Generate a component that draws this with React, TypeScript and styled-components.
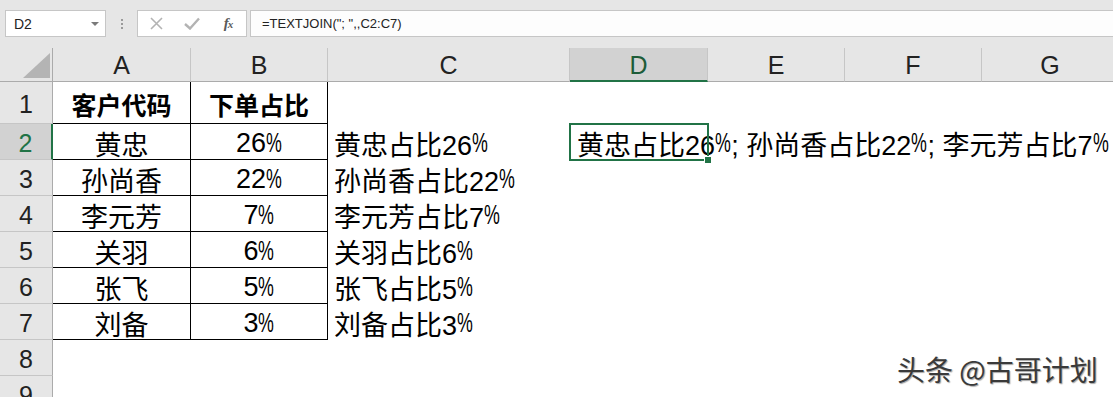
import React from "react";
import styled, { createGlobalStyle } from "styled-components";

const GlobalStyle = createGlobalStyle`
  * { box-sizing: border-box; }
  html, body { margin: 0; padding: 0; background: #ffffff; }
  body { font-family: "Liberation Sans", "Noto Sans CJK SC", sans-serif; }
`;

const Root = styled.div`
  position: relative;
  width: 1113px;
  height: 397px;
  overflow: hidden;
  background: #ffffff;
`;

const FormulaBar = styled.div`
  display: flex;
  align-items: flex-start;
  height: 48px;
  padding: 10px 0 0 5px;
  background: #e6e6e6;
`;

const NameBox = styled.div`
  display: flex;
  align-items: center;
  justify-content: space-between;
  width: 101px;
  height: 27px;
  padding: 0 6px 0 8px;
  background: #ffffff;
  border: 1px solid #c6c6c6;
  font-family: "Liberation Sans", sans-serif;
  font-size: 14px;
  color: #222;
`;

const Caret = styled.span`
  width: 0;
  height: 0;
  border-left: 4px solid transparent;
  border-right: 4px solid transparent;
  border-top: 4px solid #7a7a7a;
`;

const Grip = styled.div`
  display: flex;
  flex-direction: column;
  align-items: center;
  justify-content: center;
  gap: 2px;
  width: 31px;
  height: 27px;
`;

const GripDot = styled.span`
  width: 2px;
  height: 2px;
  background: #9a9a9a;
`;

const FxBox = styled.div`
  display: grid;
  grid-template-columns: repeat(3, 1fr);
  align-items: center;
  justify-items: center;
  width: 110px;
  height: 27px;
  background: #ffffff;
  border: 1px solid #c6c6c6;
`;

const Fx = styled.span`
  font-family: "Liberation Serif", serif;
  font-style: italic;
  font-weight: 700;
  font-size: 15px;
  color: #5a5a5a;
  letter-spacing: -1px;
  & > small {
    font-size: 11px;
  }
`;

const FormulaInput = styled.div`
  flex: 1;
  height: 27px;
  margin-left: 3px;
  padding-left: 11px;
  background: #fdfdfd;
  border-top: 1px solid #c6c6c6;
  border-bottom: 1px solid #c6c6c6;
  border-left: 1px solid #c6c6c6;
  font-family: "Liberation Sans", sans-serif;
  font-size: 13px;
  line-height: 25px;
  color: #222;
  white-space: nowrap;
`;

const Sheet = styled.div`
  display: grid;
  grid-template-columns: 53px 138px 137px 242px 138px 137px 137px 137px;
  grid-template-rows: 34px 42px repeat(8, 36px);
`;

const Corner = styled.div`
  position: relative;
  background: #e6e6e6;
  border-right: 1px solid #ababab;
  border-bottom: 1px solid #ababab;
  & > svg {
    position: absolute;
    left: 0;
    top: 0;
  }
`;

const ColHeader = styled.div<{ $active?: boolean }>`
  display: flex;
  align-items: center;
  justify-content: center;
  padding-top: 2px;
  background: ${(p) => (p.$active ? "#d2d2d2" : "#e6e6e6")};
  border-right: 1px solid #c6c6c6;
  border-bottom: ${(p) => (p.$active ? "2px solid #217346" : "1px solid #ababab")};
  font-family: "Liberation Sans", sans-serif;
  font-size: 25px;
  color: ${(p) => (p.$active ? "#1d5c38" : "#222")};
`;

const RowHeader = styled.div<{ $active?: boolean }>`
  display: flex;
  align-items: center;
  justify-content: center;
  padding-top: 4px;
  background: ${(p) => (p.$active ? "#d2d2d2" : "#e6e6e6")};
  border-right: ${(p) => (p.$active ? "2px solid #217346" : "1px solid #ababab")};
  border-bottom: 1px solid #c6c6c6;
  font-family: "Liberation Sans", sans-serif;
  font-size: 25px;
  color: ${(p) => (p.$active ? "#217346" : "#222")};
`;

const Cell = styled.div<{ $center?: boolean; $bold?: boolean; $boxed?: boolean }>`
  display: flex;
  align-items: center;
  justify-content: ${(p) => (p.$center ? "center" : "flex-start")};
  padding: 3px 6px 0 6px;
  border-right: 1px solid ${(p) => (p.$boxed ? "#000" : "transparent")};
  border-bottom: 1px solid ${(p) => (p.$boxed ? "#000" : "transparent")};
  font-family: "Liberation Sans", "Noto Sans CJK SC", sans-serif;
  font-size: ${(p) => (p.$bold ? "25px" : "27px")};
  font-weight: ${(p) => (p.$bold ? 700 : 400)};
  color: #000;
  white-space: nowrap;
  overflow: visible;
`;

const ActiveCell = styled(Cell)`
  position: relative;
  padding-left: 7px;
`;

const Selection = styled.span`
  position: absolute;
  left: -1px;
  top: -1px;
  width: 140px;
  height: 38px;
  border: 2px solid #217346;
  pointer-events: none;
`;

const FillHandle = styled.span`
  position: absolute;
  right: -4px;
  bottom: -4px;
  width: 6px;
  height: 6px;
  background: #217346;
  outline: 1px solid #ffffff;
`;

const Pct = styled.span`
  display: inline-block;
  width: 0.6em;
  transform: scaleX(0.66);
  transform-origin: left center;
`;

const Watermark = styled.div`
  position: absolute;
  left: 897px;
  top: 355px;
  font-family: "Noto Sans CJK SC", sans-serif;
  font-size: 28px;
  line-height: 1;
  color: #3a3a3a;
  text-shadow: 1px 1px 1px rgba(0, 0, 0, 0.35), -1px -1px 0 rgba(255, 255, 255, 0.9);
  white-space: nowrap;
`;

const withPct = (s: string) => {
  const parts = s.split("%");
  return parts.map((p, i) => (
    <React.Fragment key={i}>
      {p}
      {i < parts.length - 1 && <Pct>%</Pct>}
    </React.Fragment>
  ));
};

const data: [string, string][] = [
  ["黄忠", "26%"],
  ["孙尚香", "22%"],
  ["李元芳", "7%"],
  ["关羽", "6%"],
  ["张飞", "5%"],
  ["刘备", "3%"],
];

const cols = ["A", "B", "C", "D", "E", "F", "G"];

export default function App() {
  return (
    <Root>
      <GlobalStyle />
      <FormulaBar>
        <NameBox>
          <span>D2</span>
          <Caret />
        </NameBox>
        <Grip>
          <GripDot />
          <GripDot />
          <GripDot />
        </Grip>
        <FxBox>
          <svg width="13" height="13" viewBox="0 0 13 13">
            <path d="M1 1 L12 12 M12 1 L1 12" stroke="#b3b3b3" strokeWidth="1.6" fill="none" />
          </svg>
          <svg width="16" height="13" viewBox="0 0 16 13">
            <path d="M1 7 L6 11.5 L15 1.5" stroke="#b3b3b3" strokeWidth="2.4" fill="none" />
          </svg>
          <Fx>
            f<small>x</small>
          </Fx>
        </FxBox>
        <FormulaInput>=TEXTJOIN("; ",,C2:C7)</FormulaInput>
      </FormulaBar>
      <Sheet>
        <Corner>
          <svg width="52" height="33" viewBox="0 0 52 33">
            <polygon points="23,30 50,5 50,30" fill="#b4b4b4" />
          </svg>
        </Corner>
        {cols.map((c) => (
          <ColHeader key={c} $active={c === "D"}>
            {c}
          </ColHeader>
        ))}

        <RowHeader>1</RowHeader>
        <Cell $center $bold $boxed>
          客户代码
        </Cell>
        <Cell $center $bold $boxed>
          下单占比
        </Cell>
        <Cell />
        <Cell />
        <Cell />
        <Cell />
        <Cell />

        {data.map(([name, pct], i) => (
          <React.Fragment key={name}>
            <RowHeader $active={i === 0}>{i + 2}</RowHeader>
            <Cell $center $boxed>
              {name}
            </Cell>
            <Cell $center $boxed>
              {withPct(pct)}
            </Cell>
            <Cell>{withPct(`${name}占比${pct}`)}</Cell>
            {i === 0 ? (
              <ActiveCell>
                {withPct("黄忠占比26%; 孙尚香占比22%; 李元芳占比7%")}
                <Selection>
                  <FillHandle />
                </Selection>
              </ActiveCell>
            ) : (
              <Cell />
            )}
            <Cell />
            <Cell />
            <Cell />
          </React.Fragment>
        ))}

        {[8, 9].map((n) => (
          <React.Fragment key={n}>
            <RowHeader>{n}</RowHeader>
            <Cell />
            <Cell />
            <Cell />
            <Cell />
            <Cell />
            <Cell />
            <Cell />
          </React.Fragment>
        ))}
      </Sheet>
      <Watermark>头条 @古哥计划</Watermark>
    </Root>
  );
}
